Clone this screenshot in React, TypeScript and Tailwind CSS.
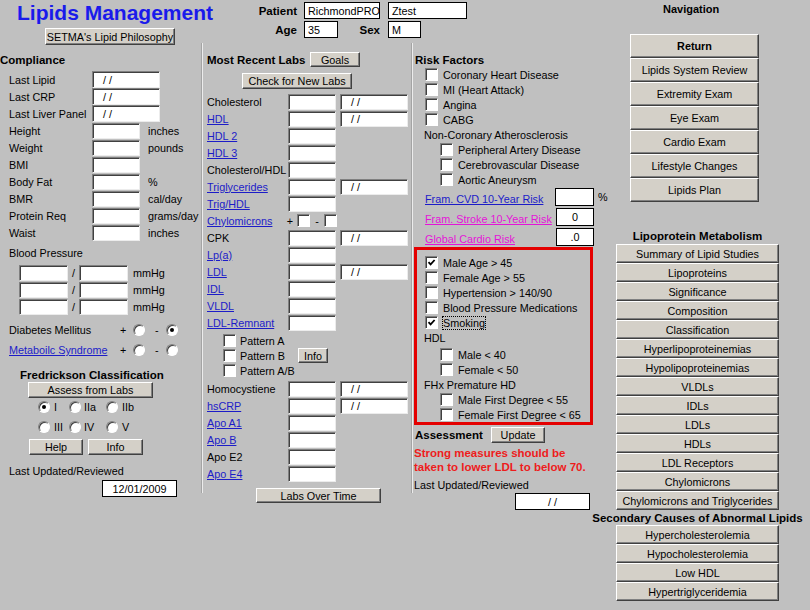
import React from "react";

type P = { className?: string; children?: React.ReactNode };

function Btn({ className = "", children }: P) {
  return (
    <div
      className={`flex items-center justify-center bg-[#d4d0c8] border border-t-white border-l-white border-r-[#404040] border-b-[#404040] shadow-[inset_-1px_-1px_0_#808080] whitespace-nowrap text-black shrink-0 ${className}`}
    >
      {children}
    </div>
  );
}

function Field({ className = "", children }: P) {
  return (
    <div
      className={`bg-white border border-t-[#808080] border-l-[#808080] border-b-[#ececec] border-r-[#ececec] shadow-[inset_1px_1px_0_#404040] flex items-center whitespace-nowrap overflow-hidden shrink-0 ${className}`}
    >
      {children}
    </div>
  );
}

function Box({ className = "", children }: P) {
  return (
    <div
      className={`bg-white border border-black flex items-center whitespace-nowrap overflow-hidden shrink-0 ${className}`}
    >
      {children}
    </div>
  );
}

function Check({ on = false, className = "" }: { on?: boolean; className?: string }) {
  return (
    <div
      className={`w-[13px] h-[13px] bg-white border border-t-[#808080] border-l-[#808080] border-b-white border-r-white shadow-[inset_1px_1px_0_#404040] flex items-center justify-center shrink-0 ${className}`}
    >
      {on && (
        <svg viewBox="0 0 9 9" className="w-[9px] h-[9px]">
          <path d="M1.5 4.2 L3.6 6.4 L7.6 2" stroke="black" strokeWidth="1.8" fill="none" />
        </svg>
      )}
    </div>
  );
}

function Radio({ on = false }: { on?: boolean }) {
  return (
    <div className="w-[12px] h-[12px] rounded-full bg-white border border-t-[#808080] border-l-[#808080] border-b-white border-r-white shadow-[inset_1px_1px_0_#404040] flex items-center justify-center shrink-0">
      {on && <div className="w-[4px] h-[4px] rounded-full bg-black" />}
    </div>
  );
}

function A({ children, pink = false }: { children: React.ReactNode; pink?: boolean }) {
  return (
    <span className={pink ? "text-[#e414d8] underline" : "text-[#1c1cc8] underline"}>{children}</span>
  );
}

function Divider() {
  return <div className="w-[2px] h-[450px] -mt-[3px] border-l border-l-[#a4a4a4] border-r border-r-[#ececec] shrink-0" />;
}

type Lab = { l: string; link?: boolean; date?: boolean; chylo?: boolean };

const labsA: Lab[] = [
  { l: "Cholesterol", date: true },
  { l: "HDL", link: true, date: true },
  { l: "HDL 2", link: true },
  { l: "HDL 3", link: true },
  { l: "Cholesterol/HDL" },
  { l: "Triglycerides", link: true, date: true },
  { l: "Trig/HDL", link: true },
  { l: "Chylomicrons", link: true, chylo: true },
  { l: "CPK", date: true },
  { l: "Lp(a)", link: true },
  { l: "LDL", link: true, date: true },
  { l: "IDL", link: true },
  { l: "VLDL", link: true },
  { l: "LDL-Remnant", link: true },
];

const labsB: Lab[] = [
  { l: "Homocystiene", date: true },
  { l: "hsCRP", link: true, date: true },
  { l: "Apo A1", link: true },
  { l: "Apo B", link: true },
  { l: "Apo E2" },
  { l: "Apo E4", link: true },
];

function LabRow({ r }: { r: Lab }) {
  if (r.chylo) {
    return (
      <div className="h-[17px] flex items-center">
        <span className="pl-[4px] w-[80px] whitespace-nowrap">
          <A>{r.l}</A>
        </span>
        <span className="w-[14px] text-center">+</span>
        <Check />
        <span className="w-[14px] text-center">-</span>
        <Check />
      </div>
    );
  }
  return (
    <div className="h-[17px] flex items-center">
      <span className="pl-[4px] w-[85px] whitespace-nowrap shrink-0">{r.link ? <A>{r.l}</A> : r.l}</span>
      <Field className="w-[48px] h-[16px]" />
      {r.date && <Field className="ml-[4px] w-[68px] h-[16px] pl-[10px]">/ /</Field>}
    </div>
  );
}

const compliance: { l: string; date?: boolean; unit?: string }[] = [
  { l: "Last Lipid", date: true },
  { l: "Last CRP", date: true },
  { l: "Last Liver Panel", date: true },
  { l: "Height", unit: "inches" },
  { l: "Weight", unit: "pounds" },
  { l: "BMI" },
  { l: "Body Fat", unit: "%" },
  { l: "BMR", unit: "cal/day" },
  { l: "Protein Req", unit: "grams/day" },
  { l: "Waist", unit: "inches" },
];

const nav = ["Lipids System Review", "Extremity Exam", "Eye Exam", "Cardio Exam", "Lifestyle Changes", "Lipids Plan"];
const lipo = [
  "Summary of Lipid Studies",
  "Lipoproteins",
  "Significance",
  "Composition",
  "Classification",
  "Hyperlipoproteinemias",
  "Hypolipoproteinemias",
  "VLDLs",
  "IDLs",
  "LDLs",
  "HDLs",
  "LDL Receptors",
  "Chylomicrons",
  "Chylomicrons and Triglycerides",
];
const secondary = ["Hypercholesterolemia", "Hypocholesterolemia", "Low HDL", "Hypertriglyceridemia"];

function Header() {
  return (
    <div className="h-[46px] flex shrink-0">
      <div className="w-[245px] pl-[17px] pt-[1px] flex flex-col shrink-0">
        <div className="text-[21px] leading-[24px] font-bold text-[#1a1aeb] whitespace-nowrap">Lipids Management</div>
        <Btn className="mt-[3px] ml-[28px] w-[130px] h-[17px]">SETMA's Lipid Philosophy</Btn>
      </div>
      <div className="pt-[2px] flex flex-col gap-[2px]">
        <div className="flex items-center h-[17px]">
          <span className="w-[52px] text-right font-bold text-[11.5px]">Patient</span>
          <Box className="ml-[7px] w-[76px] h-[17px] pl-[3px]">RichmondPROD</Box>
          <Box className="ml-[8px] w-[79px] h-[17px] pl-[3px]">Ztest</Box>
        </div>
        <div className="flex items-center h-[17px]">
          <span className="w-[52px] text-right font-bold text-[11.5px]">Age</span>
          <Box className="ml-[7px] w-[34px] h-[17px] pl-[3px]">35</Box>
          <span className="w-[42px] text-right font-bold text-[11.5px]">Sex</span>
          <Box className="ml-[8px] w-[33px] h-[17px] pl-[3px]">M</Box>
        </div>
      </div>
    </div>
  );
}

function Col1() {
  return (
    <div className="w-[201px] shrink-0 flex flex-col">
      <div className="mt-[7px] font-bold text-[11.5px]">Compliance</div>
      <div className="mt-[4px] flex flex-col">
        {compliance.map((r) => (
          <div key={r.l} className="h-[17px] flex items-center">
            <span className="pl-[9px] w-[92px] whitespace-nowrap shrink-0">{r.l}</span>
            {r.date ? (
              <Field className="w-[68px] h-[17px] pl-[10px]">/ /</Field>
            ) : (
              <Field className="w-[48px] h-[16px]" />
            )}
            {r.unit && <span className="ml-[8px] whitespace-nowrap">{r.unit}</span>}
          </div>
        ))}
      </div>
      <div className="mt-[5px] pl-[9px]">Blood Pressure</div>
      <div className="mt-[4px] flex flex-col">
        {[0, 1, 2].map((i) => (
          <div key={i} className="h-[17px] flex items-center pl-[19px]">
            <Field className="w-[49px] h-[16px]" />
            <span className="w-[11px] text-center">/</span>
            <Field className="w-[49px] h-[16px]" />
            <span className="ml-[5px]">mmHg</span>
          </div>
        ))}
      </div>
      <div className="mt-[7px] h-[16px] flex items-center">
        <span className="pl-[9px] w-[120px] shrink-0">Diabetes Mellitus</span>
        <span className="w-[13px]">+</span>
        <Radio />
        <span className="ml-[10px] w-[11px]">-</span>
        <Radio on />
      </div>
      <div className="mt-[4px] h-[16px] flex items-center">
        <span className="pl-[9px] w-[120px] shrink-0 whitespace-nowrap">
          <A>Metaboilc Syndrome</A>
        </span>
        <span className="w-[13px]">+</span>
        <Radio />
        <span className="ml-[10px] w-[11px]">-</span>
        <Radio />
      </div>
      <div className="mt-[10px] pl-[20px] font-bold text-[11.5px] whitespace-nowrap">Fredrickson Classification</div>
      <Btn className="ml-[28px] w-[125px] h-[16px]">Assess from Labs</Btn>
      <div className="mt-[2px] h-[14px] flex items-center pl-[38px]">
        <div className="w-[31px] flex items-center">
          <Radio on />
          <span className="ml-[4px]">I</span>
        </div>
        <div className="w-[37px] flex items-center">
          <Radio />
          <span className="ml-[3px]">IIa</span>
        </div>
        <div className="flex items-center">
          <Radio />
          <span className="ml-[4px]">IIb</span>
        </div>
      </div>
      <div className="mt-[6px] h-[14px] flex items-center pl-[38px]">
        <div className="w-[31px] flex items-center">
          <Radio />
          <span className="ml-[4px]">III</span>
        </div>
        <div className="w-[37px] flex items-center">
          <Radio />
          <span className="ml-[3px]">IV</span>
        </div>
        <div className="flex items-center">
          <Radio />
          <span className="ml-[4px]">V</span>
        </div>
      </div>
      <div className="mt-[5px] flex pl-[29px]">
        <Btn className="w-[54px] h-[16px]">Help</Btn>
        <Btn className="ml-[5px] w-[55px] h-[16px]">Info</Btn>
      </div>
      <div className="mt-[9px] pl-[9px] whitespace-nowrap">Last Updated/Reviewed</div>
      <Box className="mt-[2px] ml-[102px] w-[75px] h-[17px] justify-center">12/01/2009</Box>
    </div>
  );
}

function Col2() {
  return (
    <div className="w-[208px] shrink-0 flex flex-col">
      <div className="mt-[6px] h-[15px] flex items-center pl-[4px]">
        <span className="w-[103px] font-bold text-[11.5px] whitespace-nowrap shrink-0">Most Recent Labs</span>
        <Btn className="w-[50px] h-[15px]">Goals</Btn>
      </div>
      <Btn className="mt-[6px] ml-[39px] w-[110px] h-[16px]">Check for New Labs</Btn>
      <div className="mt-[4px] flex flex-col">
        {labsA.map((r) => (
          <LabRow key={r.l} r={r} />
        ))}
      </div>
      <div className="mt-[2px] flex flex-col">
        <div className="h-[15px] flex items-center pl-[20px]">
          <Check />
          <span className="ml-[4px] w-[58px]">Pattern A</span>
        </div>
        <div className="h-[15px] flex items-center pl-[20px]">
          <Check />
          <span className="ml-[4px] w-[58px]">Pattern B</span>
          <Btn className="w-[30px] h-[15px]">Info</Btn>
        </div>
        <div className="h-[15px] flex items-center pl-[20px]">
          <Check />
          <span className="ml-[4px] w-[58px]">Pattern A/B</span>
        </div>
      </div>
      <div className="mt-[2px] flex flex-col">
        {labsB.map((r) => (
          <LabRow key={r.l} r={r} />
        ))}
      </div>
      <Btn className="mt-[6px] ml-[53px] w-[125px] h-[15px]">Labs Over Time</Btn>
    </div>
  );
}

function CbRow({ label, on = false, nested = false }: { label: React.ReactNode; on?: boolean; nested?: boolean }) {
  return (
    <div className={`h-[15px] flex items-center ${nested ? "pl-[27px]" : "pl-[12px]"}`}>
      <Check on={on} />
      <span className="ml-[5px] whitespace-nowrap">{label}</span>
    </div>
  );
}

function BoxRow({ label, on = false, nested = false }: { label: React.ReactNode; on?: boolean; nested?: boolean }) {
  return (
    <div className={`h-[15px] flex items-center ${nested ? "pl-[23px]" : "pl-[8px]"}`}>
      <Check on={on} />
      <span className="ml-[5px] whitespace-nowrap">{label}</span>
    </div>
  );
}

function Col3() {
  return (
    <div className="w-[197px] shrink-0 flex flex-col">
      <div className="mt-[7px] pl-[2px] font-bold text-[11.5px]">Risk Factors</div>
      <CbRow label="Coronary Heart Disease" />
      <CbRow label="MI (Heart Attack)" />
      <CbRow label="Angina" />
      <CbRow label="CABG" />
      <div className="h-[15px] flex items-center pl-[11px] whitespace-nowrap">Non-Coronary Atherosclerosis</div>
      <CbRow nested label="Peripheral Artery Disease" />
      <CbRow nested label="Cerebrovascular Disease" />
      <CbRow nested label="Aortic Aneurysm" />
      <div className="h-[20px] flex items-center pl-[12px]">
        <span className="w-[130px] mt-[3px] whitespace-nowrap shrink-0">
          <A>Fram. CVD 10-Year Risk</A>
        </span>
        <Box className="w-[39px] h-[18px] justify-center" />
        <span className="ml-[4px]">%</span>
      </div>
      <div className="h-[20px] flex items-center pl-[12px]">
        <span className="w-[131px] mt-[3px] whitespace-nowrap shrink-0">
          <A pink>Fram. Stroke 10-Year Risk</A>
        </span>
        <Box className="w-[38px] h-[18px] justify-center">0</Box>
      </div>
      <div className="h-[20px] flex items-center pl-[12px]">
        <span className="w-[131px] mt-[3px] whitespace-nowrap shrink-0">
          <A pink>Global Cardio Risk</A>
        </span>
        <Box className="w-[38px] h-[18px] justify-center">.0</Box>
      </div>
      <div className="ml-[1px] w-[179px] border-[3px] border-[#e40000] pt-[5px] flex flex-col">
        <BoxRow on label="Male Age > 45" />
        <BoxRow label="Female Age > 55" />
        <BoxRow label="Hypertension > 140/90" />
        <BoxRow label="Blood Pressure Medications" />
        <div className="h-[15px] flex items-center pl-[8px]">
          <Check on />
          <span className="ml-[4px] border border-dotted border-black leading-[12px] whitespace-nowrap">Smoking</span>
        </div>
        <div className="h-[15px] flex items-center pl-[7px]">HDL</div>
        <div className="mt-[2px]" />
        <BoxRow nested label="Male < 40" />
        <BoxRow nested label="Female < 50" />
        <div className="h-[15px] flex items-center pl-[7px] whitespace-nowrap">FHx Premature HD</div>
        <BoxRow nested label="Male First Degree < 55" />
        <BoxRow nested label="Female First Degree < 65" />
      </div>
      <div className="mt-[2px] h-[16px] flex items-center pl-[2px]">
        <span className="w-[76px] font-bold text-[11.5px] shrink-0">Assessment</span>
        <Btn className="w-[54px] h-[16px]">Update</Btn>
      </div>
      <div className="mt-[3px] pl-[1px] font-bold text-[11.5px] text-[#ee1c1c] whitespace-nowrap">
        <div>Strong measures should be</div>
        <div>taken to lower LDL to below 70.</div>
      </div>
      <div className="mt-[4px] pl-[1px] whitespace-nowrap">Last Updated/Reviewed</div>
      <Box className="mt-[1px] ml-[102px] w-[75px] h-[17px] justify-center">/ /</Box>
    </div>
  );
}

function Col4() {
  return (
    <div className="w-[200px] shrink-0 flex flex-col">
      <div className="mt-[2px] ml-[53px] font-bold text-[11px]">Navigation</div>
      <div className="mt-[18px] ml-[20px] w-[129px] flex flex-col">
        <Btn className="h-[24px] font-bold">Return</Btn>
        {nav.map((n) => (
          <Btn key={n} className="h-[24px]">
            {n}
          </Btn>
        ))}
      </div>
      <div className="ml-[6px] w-[163px] flex flex-col items-center">
        <div className="mt-[27px] font-bold text-[11.5px] whitespace-nowrap">Lipoprotein Metabolism</div>
        <div className="mt-[1px] w-[163px] flex flex-col">
          {lipo.map((n) => (
            <Btn key={n} className="h-[19px]">
              {n}
            </Btn>
          ))}
        </div>
        <div className="mt-[1px] font-bold text-[11.5px] whitespace-nowrap">Secondary Causes of Abnormal Lipids</div>
        <div className="w-[163px] flex flex-col">
          {secondary.map((n) => (
            <Btn key={n} className="h-[19px]">
              {n}
            </Btn>
          ))}
        </div>
      </div>
    </div>
  );
}

export default function App() {
  return (
    <div className="w-[810px] h-[610px] bg-[#c0c0c0] flex overflow-hidden text-[10.8px] leading-[14px] text-black font-['Liberation_Sans',Arial,Helvetica,sans-serif]">
      <div className="w-[610px] flex flex-col shrink-0">
        <Header />
        <div className="flex">
          <Col1 />
          <Divider />
          <Col2 />
          <Divider />
          <Col3 />
        </div>
      </div>
      <Col4 />
    </div>
  );
}
